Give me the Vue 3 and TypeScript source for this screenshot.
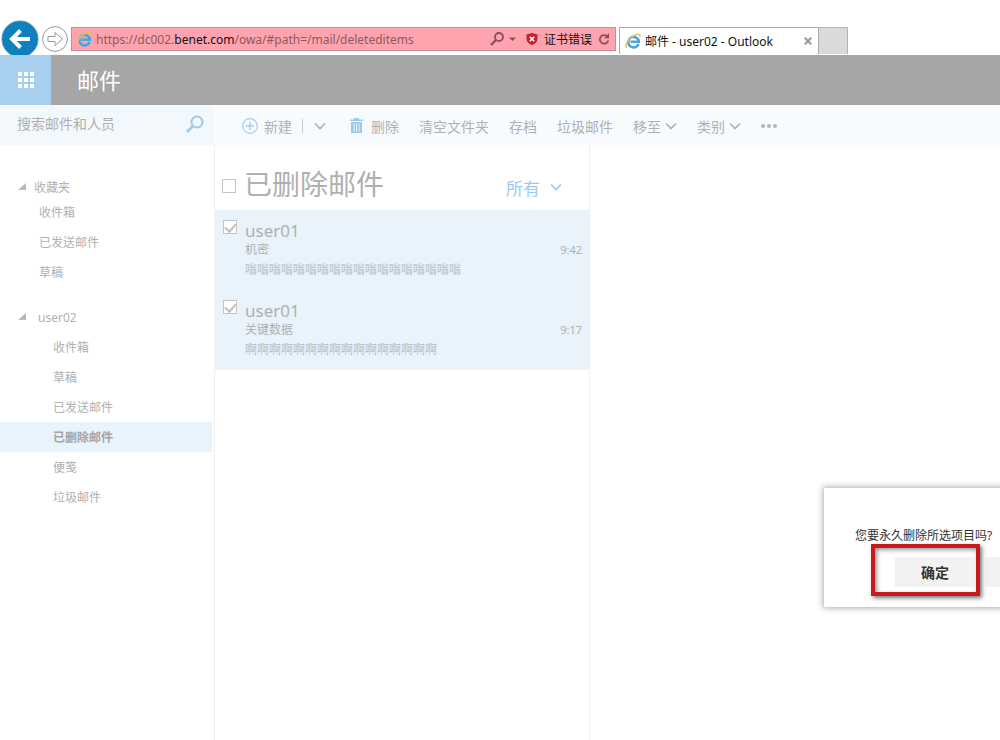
<script setup lang="ts">
import { ref } from 'vue'

interface Folder {
  name: string
  active?: boolean
}
interface FolderGroup {
  title: string
  nested: boolean
  folders: Folder[]
}
interface Message {
  id: number
  sender: string
  subject: string
  time: string
  preview: string
  checked: boolean
}

const groups: FolderGroup[] = [
  {
    title: '收藏夹',
    nested: false,
    folders: [{ name: '收件箱' }, { name: '已发送邮件' }, { name: '草稿' }],
  },
  {
    title: 'user02',
    nested: true,
    folders: [
      { name: '收件箱' },
      { name: '草稿' },
      { name: '已发送邮件' },
      { name: '已删除邮件', active: true },
      { name: '便笺' },
      { name: '垃圾邮件' },
    ],
  },
]

const messages = ref<Message[]>([
  { id: 1, sender: 'user01', subject: '机密', time: '9:42', preview: '嗡'.repeat(18), checked: true },
  { id: 2, sender: 'user01', subject: '关键数据', time: '9:17', preview: '啊'.repeat(16), checked: true },
])
const allChecked = ref(false)
const query = ref('')
</script>

<template>
  <div class="window">
    <svg class="defs" aria-hidden="true">
      <symbol id="ie" viewBox="0 0 16 16">
        <path d="M13.600 11 A5.300 5.300 0 1 1 13.900 8.800 H5.500" fill="none" stroke="#4aa3dc" stroke-width="2.600" />
        <path d="M2.200 14.800 C-1 13 3 6 8.500 2.800 C12.500 .5 15.800 .3 14.600 4.200" fill="none" stroke="#e6c14c" stroke-width="1.500" />
      </symbol>
      <symbol id="chevron" viewBox="0 0 12 8">
        <path d="M1 1.500 L6 6.500 L11 1.500" fill="none" stroke="currentColor" stroke-width="1.700" />
      </symbol>
    </svg>

    <header class="browser">
      <div class="nav">
        <button class="back" aria-label="后退">
          <svg viewBox="0 0 38 38" width="38" height="38">
            <circle cx="19" cy="19" r="18" fill="#0d80bd" stroke="#4a8fb5" stroke-width="1" />
            <path d="M29 19 H12 M19.500 10.500 L11 19 L19.500 27.500" fill="none" stroke="#fff" stroke-width="4" />
          </svg>
        </button>
        <button class="forward" aria-label="前进">
          <svg viewBox="0 0 26 26" width="26" height="26">
            <circle cx="13" cy="13" r="12.400" fill="#fff" stroke="#999" />
            <path d="M6 10.500 H13 V6.500 L20.500 13 L13 19.500 V15.500 H6 Z" fill="#fff" stroke="#999" />
          </svg>
        </button>
      </div>
      <div class="address">
        <svg class="ie"><use href="#ie" /></svg>
        <span class="url">https://dc002.<b>benet.com</b>/owa/#path=/mail/deleteditems</span>
        <button class="addr-icon" aria-label="搜索">
          <svg viewBox="0 0 28 14" width="28" height="14">
            <circle cx="9" cy="5" r="4" fill="none" stroke="#8b5059" stroke-width="1.800" />
            <path d="M6 8 L1 13" stroke="#8b5059" stroke-width="2.400" />
            <path d="M19 5.500 H26 L22.500 9 Z" fill="#8b5059" />
          </svg>
        </button>
        <button class="cert">
          <svg viewBox="0 0 12 12" width="12" height="12">
            <path d="M6 0 L11.500 1.500 V6 Q11 10 6 12 Q1 10 .5 6 V1.500 Z" fill="#c4202b" />
            <path d="M3.800 3.800 L8.200 8.200 M8.200 3.800 L3.800 8.200" stroke="#fff" stroke-width="1.600" />
          </svg>
          证书错误
        </button>
        <button class="addr-icon" aria-label="刷新">
          <svg viewBox="0 0 12 12" width="12" height="12">
            <path d="M10 4.500 A4.300 4.300 0 1 0 10.300 7.500" fill="none" stroke="#8b5059" stroke-width="1.800" />
            <path d="M11 0 V5.200 H6 Z" fill="#8b5059" />
          </svg>
        </button>
      </div>
      <div class="tab">
        <svg class="ie"><use href="#ie" /></svg>
        <span class="tab-title">邮件 - user02 - Outlook</span>
        <button class="close" aria-label="关闭标签页">
          <svg viewBox="0 0 8 8" width="8" height="8">
            <path d="M.8 .8 L7.200 7.200 M7.200 .8 L.8 7.200" stroke="#999" stroke-width="2" />
          </svg>
        </button>
      </div>
      <button class="new-tab" aria-label="新建标签页"></button>
    </header>

    <div class="suite">
      <button class="launcher" aria-label="应用">
        <i v-for="n in 9" :key="n"></i>
      </button>
      <h1>邮件</h1>
    </div>

    <div class="toolbar">
      <form class="search" @submit.prevent>
        <input v-model="query" type="text" placeholder="搜索邮件和人员" aria-label="搜索邮件和人员" />
        <button aria-label="搜索">
          <svg viewBox="0 0 18 18" width="18" height="18">
            <circle cx="11" cy="7" r="5.500" fill="none" stroke="#9ccaeb" stroke-width="2" />
            <path d="M7 11 L1 17" stroke="#9ccaeb" stroke-width="2.600" />
          </svg>
        </button>
      </form>
      <div class="commands">
        <button class="new">
          <svg viewBox="0 0 16 16" width="16" height="16">
            <circle cx="8" cy="8" r="7.300" fill="none" stroke="#a3cdec" stroke-width="1.200" />
            <path d="M8 4 V12 M4 8 H12" stroke="#a3cdec" stroke-width="1.400" />
          </svg>
          新建
        </button>
        <button class="split" aria-label="更多新建选项"><svg class="chev"><use href="#chevron" /></svg></button>
        <button class="delete">
          <svg viewBox="0 0 13 15" width="13" height="15">
            <path d="M0 1.500 H4 V0 H9 V1.500 H13 V3 H0 Z M1 4 H12 V15 H1 Z" fill="#9ccaeb" />
            <path d="M4 5.500 V13.500 M6.500 5.500 V13.500 M9 5.500 V13.500" stroke="#e3f1fb" />
          </svg>
          删除
        </button>
        <button>清空文件夹</button>
        <button>存档</button>
        <button>垃圾邮件</button>
        <button class="menu">移至<svg class="chev"><use href="#chevron" /></svg></button>
        <button class="menu">类别<svg class="chev"><use href="#chevron" /></svg></button>
        <button aria-label="更多">
          <svg viewBox="0 0 16 4" width="16" height="4" fill="#b5b5b5">
            <circle cx="2" cy="2" r="2" /><circle cx="8" cy="2" r="2" /><circle cx="14" cy="2" r="2" />
          </svg>
        </button>
      </div>
    </div>

    <main class="content">
      <nav class="folders">
        <section v-for="g in groups" :key="g.title" :class="{ nested: g.nested }">
          <h2>
            <svg viewBox="0 0 8 8" width="8" height="8"><path d="M8 0 V7 H0 Z" fill="#b8b8b8" /></svg>
            <span>{{ g.title }}</span>
          </h2>
          <ul>
            <li v-for="f in g.folders" :key="f.name">
              <a href="#" :class="{ active: f.active }">{{ f.name }}</a>
            </li>
          </ul>
        </section>
      </nav>

      <section class="list">
        <div class="list-head">
          <input v-model="allChecked" type="checkbox" aria-label="全选" />
          <h2>已删除邮件</h2>
          <button>所有<svg class="chev"><use href="#chevron" /></svg></button>
        </div>
        <article v-for="m in messages" :key="m.id">
          <input v-model="m.checked" type="checkbox" :aria-label="m.subject" />
          <div class="body">
            <h3>{{ m.sender }}</h3>
            <div class="row"><span>{{ m.subject }}</span><time>{{ m.time }}</time></div>
            <p>{{ m.preview }}</p>
          </div>
        </article>
      </section>

      <section class="reading"></section>
    </main>

    <div class="dialog" role="dialog" aria-labelledby="ask">
      <p id="ask">您要永久删除所选项目吗?</p>
      <div class="actions">
        <button>确定</button>
        <button aria-label="取消"></button>
      </div>
      <div class="marker"></div>
    </div>
  </div>
</template>

<style>
body {
  margin: 0;
}
</style>

<style scoped>
* {
  box-sizing: border-box;
}
.window {
  position: relative;
  display: flex;
  flex-direction: column;
  min-height: 100vh;
  overflow: hidden;
  background: #fff;
  color: #b0b0b0;
  font-family: "Noto Sans", "Noto Sans CJK SC", sans-serif;
  font-size: 12px;
}
.defs {
  position: absolute;
  width: 0;
  height: 0;
}
button {
  display: flex;
  align-items: center;
  padding: 0;
  border: 0;
  background: none;
  color: inherit;
  font: inherit;
  white-space: nowrap;
}
h1, h2, h3, p, ul {
  margin: 0;
  padding: 0;
  font-weight: 400;
  list-style: none;
}
svg {
  flex: none;
}

.browser {
  display: flex;
  align-items: flex-start;
  height: 55px;
  padding-top: 27px;
  overflow: hidden;
  color: #111;
}
.nav {
  display: flex;
  align-items: center;
  gap: 3px;
  width: 71px;
  height: 24px;
  padding-left: 1px;
}
.address {
  display: flex;
  align-items: center;
  width: 545px;
  height: 24px;
  padding: 0 5px 0 4px;
  border: 1px solid #c98a93;
  background: #ffa3af;
}
.ie {
  width: 16px;
  height: 16px;
}
.url {
  flex: 1;
  margin-left: 4px;
  color: #8b5a61;
  white-space: nowrap;
}
.url b {
  color: #111;
  font-weight: 400;
}
.cert {
  gap: 6px;
  margin: 0 6px 0 8px;
}
.tab {
  display: flex;
  align-items: center;
  width: 200px;
  height: 27px;
  margin-left: 3px;
  padding: 0 6px 0 5px;
  border: 1px solid #a3abb0;
  border-bottom: 0;
}
.tab-title {
  flex: 1;
  margin-left: 4px;
  white-space: nowrap;
}
.new-tab {
  width: 29px;
  height: 27px;
  border: 1px solid #b4b4b4;
  border-width: 1px 1px 0 0;
  background: #dadada;
}

.suite {
  display: flex;
  align-items: center;
  height: 50px;
  background: #a6a6a6;
  color: #fff;
}
.launcher {
  display: grid;
  grid-template-columns: repeat(3, 4px);
  grid-auto-rows: 4px;
  gap: 2px;
  place-content: center;
  align-items: stretch;
  width: 51px;
  height: 50px;
  background: #a6cff0;
}
.launcher i {
  background: #fff;
}
.suite h1 {
  margin-left: 26px;
  padding-bottom: 2px;
  font-size: 22px;
}

.toolbar {
  display: flex;
  height: 40px;
  background: #f8fbfe;
  font-size: 14px;
}
.search {
  display: flex;
  align-items: center;
  width: 214px;
  padding: 0 10px 3px 17px;
  background: #f2f8fc;
}
.search input {
  flex: 1;
  min-width: 0;
  padding: 0;
  border: 0;
  outline: 0;
  background: none;
  font: inherit;
}
.search input::placeholder {
  color: #b0b0b0;
}
.commands {
  display: flex;
  align-items: center;
  gap: 20px;
  padding: 1px 0 0 28px;
}
.new {
  gap: 6px;
}
.split {
  height: 14px;
  margin-left: -10px;
  padding-left: 11px;
  border-left: 1px solid #ccc;
}
.delete {
  gap: 8px;
  margin-left: 4px;
}
.menu {
  gap: 4px;
}
.chev {
  width: 12px;
  height: 8px;
}

.content {
  display: flex;
  flex: 1;
}
.folders {
  width: 212px;
  margin-right: 2px;
  padding-top: 32px;
}
.folders h2 {
  display: flex;
  align-items: center;
  height: 20px;
  padding-left: 18px;
  font-size: 12px;
}
.folders h2 span {
  margin-left: 8px;
}
.folders section + section {
  margin-top: 15px;
}
.folders .nested h2 {
  height: 30px;
}
.folders .nested h2 span {
  margin-left: 12px;
}
.folders a {
  display: block;
  padding: 1px 0 0 39px;
  color: inherit;
  line-height: 29px;
  text-decoration: none;
}
.folders .nested a {
  padding-left: 53px;
}
.folders a.active {
  background: #e9f3fb;
  color: #a4a4a4;
  font-weight: 700;
}

.list {
  width: 376px;
  border: 1px solid #f1f1f1;
  border-width: 0 1px;
}
.list-head {
  display: flex;
  align-items: center;
  height: 65px;
  padding: 12px 27px 0 7px;
}
.list-head input {
  margin-top: 5px;
}
input[type="checkbox"] {
  flex: none;
  display: grid;
  place-items: center;
  appearance: none;
  width: 14px;
  height: 14px;
  margin-right: 0;
  margin-bottom: 0;
  margin-left: 0;
  border: 1px solid #c4c4c4;
  background: #fff;
}
article input[type="checkbox"] {
  margin-top: 0;
}
input[type="checkbox"]:checked::after {
  content: "";
  width: 5px;
  height: 9px;
  margin-bottom: 3px;
  border: solid #c0c0c0;
  border-width: 0 2px 2px 0;
  transform: rotate(42deg);
}
.list-head h2 {
  flex: 1;
  margin-left: 8px;
  font-size: 28px;
  line-height: 40px;
}
.list-head button {
  gap: 10px;
  padding-top: 7px;
  color: #9ccaf0;
  font-size: 17px;
}
article {
  display: flex;
  height: 80px;
  padding: 10px 7px 0 8px;
  background: #e9f3fb;
}
.body {
  flex: 1;
  margin-left: 8px;
}
.body h3 {
  font-size: 17px;
  line-height: 21px;
}
.row {
  display: flex;
  justify-content: space-between;
  line-height: 18px;
}
.row time {
  font-size: 11px;
}
.body p {
  color: #b8bcc0;
  line-height: 22px;
}
.reading {
  flex: 1;
}

.dialog {
  position: absolute;
  top: 488px;
  right: -75px;
  width: 251px;
  height: 119px;
  padding-top: 36px;
  background: #fff;
  box-shadow: 0 0 6px 1px #aaa;
  color: #333;
}
.dialog p {
  padding-left: 31px;
  line-height: 24px;
  white-space: nowrap;
}
.actions {
  display: flex;
  gap: 10px;
  margin-top: 9px;
  padding-left: 71px;
}
.actions button {
  justify-content: center;
  width: 80px;
  height: 30px;
  background: #f2f2f2;
  font-size: 14px;
  font-weight: 700;
}
.marker {
  position: absolute;
  top: 56px;
  left: 47px;
  width: 109px;
  height: 52px;
  border: 4px solid #c8191e;
  box-shadow: 2px 2px 4px #777, inset 2px 2px 4px #999;
}
</style>
